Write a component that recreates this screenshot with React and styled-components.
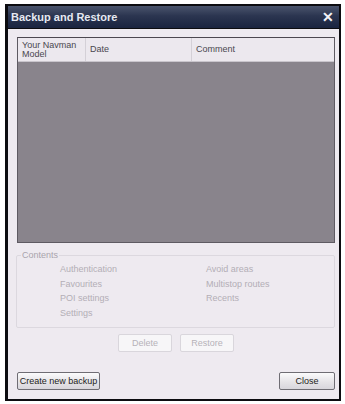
import React from "react";
import styled, { createGlobalStyle } from "styled-components";

const Global = createGlobalStyle`
  html, body { margin: 0; padding: 0; background: #fff; }
  body { font-family: "Liberation Sans", Arial, sans-serif; }
`;

const Window = styled.div`
  margin: 4px 0 0 5px;
  width: 336px;
  height: 397px;
  box-sizing: border-box;
  border: 2px solid #0c0c10;
  border-left-width: 3px;
  background: #0c0c10;
  display: flex;
  flex-direction: column;
`;

const TitleBar = styled.div`
  height: 22px;
  flex: none;
  display: flex;
  align-items: center;
  justify-content: space-between;
  padding: 0 4px 0 3px;
  background: linear-gradient(#4a546c 0%, #2b3550 45%, #1a2440 100%);
  color: #e6e9f2;
  font-weight: bold;
  font-size: 11px;
`;

const CloseX = styled.span`
  font-size: 14px;
  line-height: 1;
  font-weight: bold;
  color: #f2f2f6;
  margin-right: 1px;
`;

const Body = styled.div`
  flex: 1;
  background: #eeeaf0;
  margin-top: 1px;
  padding: 8px 4px 8px 9px;
  display: flex;
  flex-direction: column;
  font-size: 9px;
`;

const List = styled.div`
  height: 206px;
  box-sizing: border-box;
  border: 1px solid #5e5a62;
  border-top-color: #4c4850;
  display: flex;
  flex-direction: column;
  background: #89848c;
`;

const Header = styled.div`
  height: 23px;
  flex: none;
  display: flex;
  background: #ece8ee;
  border-bottom: 1px solid #c9c5cc;
  color: #4a474e;
`;

const Col = styled.div`
  width: ${(p) => p.w || "auto"};
  flex: ${(p) => (p.w ? "none" : 1)};
  box-sizing: border-box;
  padding-left: 4px;
  display: flex;
  align-items: center;
  line-height: 9px;
  border-right: ${(p) => (p.last ? "none" : "1px solid #d4d0d7")};
`;

const Group = styled.fieldset`
  margin: 7px 0 0 -1px;
  padding: 0 0 4px 0;
  border: 1px solid #dcd8df;
  border-radius: 2px;
  height: 78px;
  box-sizing: border-box;
`;

const Legend = styled.legend`
  color: #a9a4ad;
  padding: 0 1px;
  margin-left: 4px;
  font-size: 9px;
`;

const Items = styled.div`
  display: grid;
  grid-template-columns: 146px 1fr;
  grid-auto-rows: 14.5px;
  padding-left: 43px;
  padding-top: 4px;
  color: #b3aeb6;
`;

const Center = styled.div`
  display: flex;
  justify-content: center;
  gap: 8px;
  margin-top: 6px;
`;

const Button = styled.button`
  width: ${(p) => p.w}px;
  height: 18px;
  font-family: inherit;
  font-size: 9px;
  padding: 0;
  box-sizing: border-box;
  background: ${(p) =>
    p.disabled ? "#f7f6f8" : "linear-gradient(#fbfbfc, #e6e4e8 55%, #d8d6dc)"};
  color: ${(p) => (p.disabled ? "#b6b2b9" : "#1c1c20")};
  border: 1px solid ${(p) => (p.disabled ? "#d9d6dc" : "#6f6d74")};
  border-radius: 2px;
`;

const Footer = styled.div`
  margin-top: auto;
  display: flex;
  justify-content: space-between;
  padding-bottom: 1px;
`;

export default function App() {
  return (
    <>
      <Global />
      <Window>
        <TitleBar>
          <span>Backup and Restore</span>
          <CloseX>✕</CloseX>
        </TitleBar>
        <Body>
          <List>
            <Header>
              <Col w="68px">Your Navman<br />Model</Col>
              <Col w="106px">Date</Col>
              <Col last>Comment</Col>
            </Header>
          </List>
          <Group>
            <Legend>Contents</Legend>
            <Items>
              <span>Authentication</span>
              <span>Avoid areas</span>
              <span>Favourites</span>
              <span>Multistop routes</span>
              <span>POI settings</span>
              <span>Recents</span>
              <span>Settings</span>
            </Items>
          </Group>
          <Center>
            <Button w={54} disabled>Delete</Button>
            <Button w={54} disabled>Restore</Button>
          </Center>
          <Footer>
            <Button w={83}>Create new backup</Button>
            <Button w={56}>Close</Button>
          </Footer>
        </Body>
      </Window>
    </>
  );
}
